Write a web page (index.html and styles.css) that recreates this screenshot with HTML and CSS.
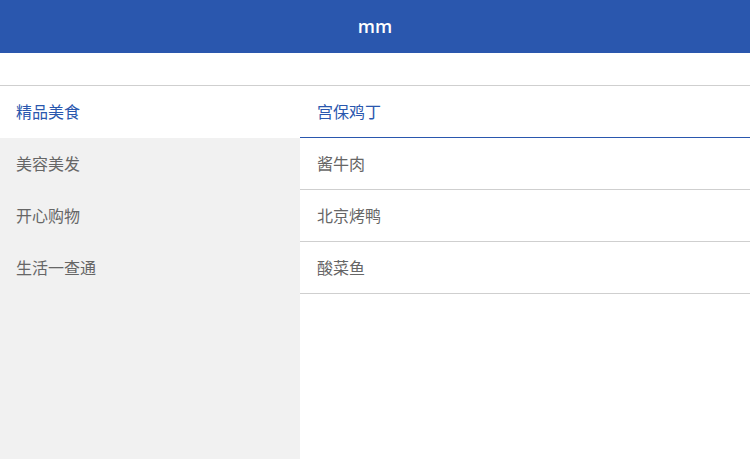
FILE: index.html
```html
<!DOCTYPE html>
<html lang="zh-CN">
<head>
    <meta charset="UTF-8">
    <meta name="viewport" content="width=device-width, initial-scale=1.0">
    <title>mm</title>
    <link rel="stylesheet" href="styles.css">
</head>
<body>
    <header class="header">mm</header>

    <div class="spacer"></div>

    <div class="menu">
        <ul class="category-list">
            <li class="category active">精品美食</li>
            <li class="category">美容美发</li>
            <li class="category">开心购物</li>
            <li class="category">生活一查通</li>
        </ul>
        <ul class="item-list">
            <li class="item active">宫保鸡丁</li>
            <li class="item">酱牛肉</li>
            <li class="item">北京烤鸭</li>
            <li class="item">酸菜鱼</li>
        </ul>
    </div>
</body>
</html>
```

FILE: styles.css
```css
* {
    box-sizing: border-box;
}

html, body {
    height: 100%;
}

body {
    margin: 0;
    display: flex;
    flex-direction: column;
    font-family: "Open Sans", "Noto Sans CJK SC", sans-serif;
    background: #fff;
    overflow: hidden;
}

.header {
    height: 53px;
    line-height: 53px;
    background: #2a57ae;
    color: #fff;
    text-align: center;
    font-size: 18px;
    font-weight: 600;
}

.spacer {
    height: 33px;
    border-bottom: 1px solid #cfcfcf;
}

.menu {
    flex: 1;
    display: flex;
}

ul {
    list-style: none;
    margin: 0;
    padding: 0;
}

.category-list {
    width: 300px;
    background: #f1f1f1;
}

.category {
    height: 52px;
    line-height: 53px;
    padding-left: 16px;
    font-size: 16px;
    color: #666;
}

.category.active {
    background: #fff;
    color: #2a57ae;
}

.item-list {
    flex: 1;
}

.item {
    height: 52px;
    line-height: 53px;
    padding-left: 17px;
    font-size: 16px;
    color: #666;
    border-bottom: 1px solid #cfcfcf;
}

.item.active {
    color: #2a57ae;
    border-bottom-color: #2a57ae;
}
```
